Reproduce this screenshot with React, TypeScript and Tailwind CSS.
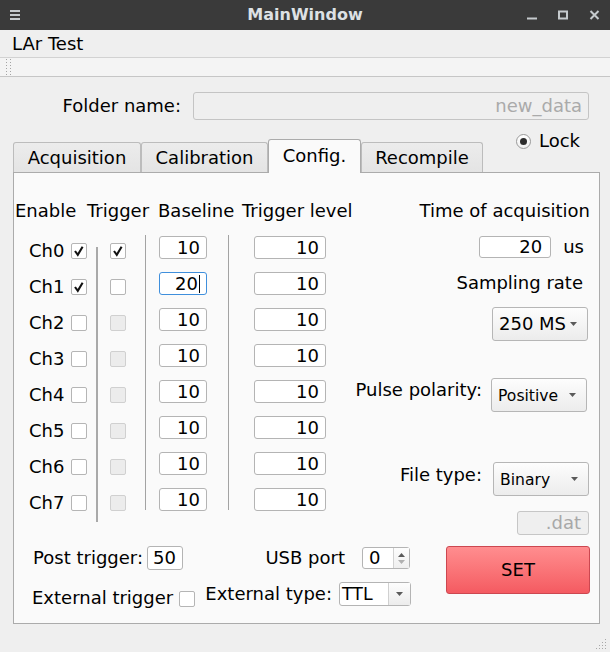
import React from "react";

function Check({ checked = false, disabled = false }: { checked?: boolean; disabled?: boolean }) {
  return (
    <div
      className={`w-[16px] h-[16px] shrink-0 rounded-[2px] border flex items-center justify-center ${
        disabled ? "bg-[#ececec] border-[#d0d0d0]" : "bg-white border-[#b5b5b5]"
      }`}
    >
      {checked && (
        <svg width="14" height="14" viewBox="0 0 14 14">
          <path d="M3 7 L5.8 10.8 L10.6 2.8" fill="none" stroke="#111" strokeWidth="2.1" />
        </svg>
      )}
    </div>
  );
}

function Arrow({ color = "#5a5a5a" }: { color?: string }) {
  return (
    <svg width="7" height="4" viewBox="0 0 7 4">
      <path d="M0 0 H7 L3.5 4 Z" fill={color} />
    </svg>
  );
}

function Field({ value, className, focused = false }: { value: string; className: string; focused?: boolean }) {
  return (
    <div
      className={`${className} shrink-0 rounded-[3px] border bg-white flex items-center justify-end pr-[6px] leading-[20px] ${
        focused ? "border-[#3f8fdc]" : "border-[#b4b4b4]"
      }`}
    >
      <span>{value}</span>
      {focused && <span className="ml-[1px] w-px h-[18px] bg-black" />}
    </div>
  );
}

function Combo({ text, className, textClass }: { text: string; className: string; textClass: string }) {
  return (
    <div
      className={`${className} shrink-0 rounded-[3px] border border-[#b6b6b6] bg-gradient-to-b from-[#fdfdfd] to-[#ececec] flex items-center pl-[6px] pr-[10px]`}
    >
      <span className={textClass}>{text}</span>
      <span className="ml-auto flex">
        <Arrow />
      </span>
    </div>
  );
}

const channels = [0, 1, 2, 3, 4, 5, 6, 7];

export default function App() {
  return (
    <div className="w-[610px] h-[652px] bg-[#efefef] flex flex-col overflow-hidden text-[18px] leading-[20px] text-black font-['DejaVu_Sans',sans-serif]">
      {/* Title bar */}
      <div className="h-[30px] shrink-0 bg-[#3a3a3a] grid grid-cols-[1fr_auto_1fr] items-center">
        <div className="pl-[10px] flex items-center">
          <svg width="10" height="10" viewBox="0 0 10 10">
            <rect x="0" y="0" width="10" height="2" fill="#c5cacd" />
            <rect x="0" y="4" width="10" height="2" fill="#c5cacd" />
            <rect x="0" y="8" width="10" height="2" fill="#c5cacd" />
          </svg>
        </div>
        <div className="text-[16px] font-bold text-[#dde1e4] leading-[20px]">MainWindow</div>
        <div className="flex items-center justify-end gap-[21px] pr-[10px]">
          <svg width="10" height="10" viewBox="0 0 10 10">
            <rect x="0" y="7.5" width="10" height="2" fill="#c5cacd" />
          </svg>
          <svg width="10" height="10" viewBox="0 0 10 10">
            <rect x="1" y="1.5" width="8" height="7" fill="none" stroke="#c5cacd" strokeWidth="2" />
          </svg>
          <svg width="11" height="10" viewBox="0 0 11 10">
            <path d="M1.5 1 L9.5 9 M9.5 1 L1.5 9" stroke="#c5cacd" strokeWidth="2" />
          </svg>
        </div>
      </div>

      {/* Menu bar */}
      <div className="h-[28px] shrink-0 flex items-center px-[12px] border-b border-[#d2d2d2]">LAr Test</div>

      {/* Toolbar */}
      <div className="h-[19px] shrink-0 bg-[#f4f4f4] border-b border-[#c6c6c6] flex items-center pl-[5px]">
        <svg width="8" height="18" viewBox="0 0 8 18">
          {[0, 1, 2, 3, 4, 5].map((i) => (
            <g key={i}>
              <rect x="1" y={1 + i * 3} width="1" height="1" fill="#a4a4a4" />
              <rect x="5" y={1 + i * 3} width="1" height="1" fill="#a4a4a4" />
            </g>
          ))}
        </svg>
      </div>

      {/* Folder name */}
      <div className="mt-[15px] h-[28px] flex items-center">
        <div className="w-[181px] text-right">Folder name:</div>
        <div className="ml-[12px] w-[396px] h-[28px] rounded-[3px] border border-[#c4c4c4] bg-[#efefef] flex items-center justify-end pr-[6px] text-[#aaaaaa]">
          new_data
        </div>
      </div>

      {/* Tabs row */}
      <div className="mt-[19px] h-[33px] flex items-end pl-[13px]">
        <div className="w-[128px] h-[30px] rounded-t-[3px] border border-b-0 border-[#bcbcbc] bg-gradient-to-b from-[#ececec] to-[#e4e4e4] flex items-center justify-center">
          Acquisition
        </div>
        <div className="w-[127px] h-[30px] rounded-t-[3px] border border-b-0 border-[#bcbcbc] bg-gradient-to-b from-[#ececec] to-[#e4e4e4] flex items-center justify-center">
          Calibration
        </div>
        <div className="relative z-10 w-[93px] h-[34px] -mb-[1px] rounded-t-[3px] border border-b-0 border-[#ababab] bg-[#fafafa] flex items-center justify-center pb-[1px]">
          Config.
        </div>
        <div className="w-[122px] h-[30px] rounded-t-[3px] border border-b-0 border-[#bcbcbc] bg-gradient-to-b from-[#ececec] to-[#e4e4e4] flex items-center justify-center">
          Recompile
        </div>
        <div className="ml-auto self-start -mt-[8px] mr-[30px] h-[20px] flex items-center gap-[8px]">
          <div className="w-[15px] h-[15px] rounded-full border border-[#9a9a9a] bg-gradient-to-b from-white to-[#f0f0f0] flex items-center justify-center">
            <div className="w-[7px] h-[7px] rounded-full bg-[#2c2c2c]" />
          </div>
          <span>Lock</span>
        </div>
      </div>

      {/* Tab pane */}
      <div className="ml-[13px] w-[587px] h-[452px] shrink-0 border border-[#ababab] bg-[#fafafa] flex flex-col">
        {/* upper section */}
        <div className="pt-[28px] flex items-start">
          {/* left block */}
          <div className="w-[336px] shrink-0 flex flex-col">
            <div className="h-[20px] grid grid-cols-[72px_71px_84px_1fr] pl-[1px] whitespace-nowrap">
              <span>Enable</span>
              <span>Trigger</span>
              <span>Baseline</span>
              <span>Trigger level</span>
            </div>
            <div className="mt-[14px] flex items-start">
              {/* Enable column */}
              <div className="w-[82px] pt-[4px] pl-[15px] flex flex-col gap-[13px]">
                {channels.map((c) => (
                  <div key={c} className="h-[23px] flex items-center">
                    <span className="w-[42px]">Ch{c}</span>
                    <Check checked={c < 2} />
                  </div>
                ))}
              </div>
              <div className="w-[2px] mt-[12px] h-[275px] bg-[#a9a9a9]" />
              {/* Trigger column */}
              <div className="w-[47px] pt-[4px] pl-[12px] flex flex-col gap-[13px]">
                {channels.map((c) => (
                  <div key={c} className="h-[23px] flex items-center">
                    <Check checked={c === 0} disabled={c >= 2} />
                  </div>
                ))}
              </div>
              <div className="w-px h-[275px] bg-[#a3a3a3]" />
              {/* Baseline column */}
              <div className="w-[82px] pt-[1px] pl-[13px] flex flex-col gap-[13px]">
                {channels.map((c) => (
                  <Field key={c} value={c === 1 ? "20" : "10"} focused={c === 1} className="w-[48px] h-[23px]" />
                ))}
              </div>
              <div className="w-px h-[275px] bg-[#a3a3a3]" />
              {/* Trigger level column */}
              <div className="pt-[1px] pl-[25px] flex flex-col gap-[13px]">
                {channels.map((c) => (
                  <Field key={c} value="10" className="w-[72px] h-[23px]" />
                ))}
              </div>
            </div>
          </div>

          {/* right block */}
          <div className="flex-1 flex flex-col items-end">
            <div className="h-[20px] mr-[9px] whitespace-nowrap">Time of acquisition</div>
            <div className="mt-[15px] mr-[15px] h-[22px] flex items-center gap-[12px]">
              <Field value="20" className="w-[72px] h-[22px] pr-[8px]" />
              <span>us</span>
            </div>
            <div className="mt-[15px] mr-[16px] h-[20px]">Sampling rate</div>
            <div className="mt-[14px] mr-[11px]">
              <Combo text="250 MS" className="w-[96px] h-[34px]" textClass="text-[18px]" />
            </div>
            <div className="mt-[37px] mr-[12px] flex items-start gap-[9px]">
              <span className="mt-[2px] whitespace-nowrap">Pulse polarity:</span>
              <Combo text="Positive" className="w-[96px] h-[34px]" textClass="text-[15.6px] pt-[2px]" />
            </div>
            <div className="mt-[50px] mr-[10px] flex items-start gap-[11px]">
              <span className="mt-[3px] whitespace-nowrap">File type:</span>
              <Combo text="Binary" className="w-[96px] h-[34px]" textClass="text-[15.6px] pt-[2px]" />
            </div>
            <div className="mt-[15px] mr-[10px] w-[72px] h-[24px] rounded-[3px] border border-[#c6c6c6] bg-[#efefef] flex items-center justify-end pr-[7px] text-[#a8a8a8]">
              .dat
            </div>
          </div>
        </div>

        {/* bottom section */}
        <div className="mt-[11px] flex items-start">
          <div className="w-[397px] shrink-0 flex flex-col">
            <div className="h-[24px] flex items-center">
              <span className="w-[129px] text-right whitespace-nowrap">Post trigger:</span>
              <div className="ml-[4px]">
                <Field value="50" className="w-[36px] h-[24px] pr-[5px]" />
              </div>
              <span className="w-[162px] text-right whitespace-nowrap">USB port</span>
              <div className="ml-[17px] w-[48px] h-[22px] rounded-[3px] border border-[#b4b4b4] bg-white flex">
                <span className="flex-1 pl-[6px] leading-[20px]">0</span>
                <div className="w-[16px] border-l border-[#d2d2d2] bg-gradient-to-b from-[#fdfdfd] to-[#efefef] flex flex-col items-center justify-center gap-[3px]">
                  <svg width="7" height="4" viewBox="0 0 7 4">
                    <path d="M0 4 H7 L3.5 0 Z" fill="#5a5a5a" />
                  </svg>
                  <Arrow color="#b0b0b0" />
                </div>
              </div>
            </div>
            <div className="mt-[12px] h-[24px] flex items-start">
              <span className="w-[165px] pl-[18px] mt-[6px] whitespace-nowrap">External trigger</span>
              <div className="mt-[9px]">
                <Check />
              </div>
              <span className="w-[137px] text-right mt-[2px] whitespace-nowrap">External type:</span>
              <div className="ml-[7px] w-[72px] h-[24px] rounded-[3px] border border-[#b4b4b4] bg-white flex">
                <span className="flex-1 pl-[2px] leading-[22px] text-[17.4px]">TTL</span>
                <div className="w-[22px] border-l border-[#d0d0d0] bg-gradient-to-b from-[#fdfdfd] to-[#ececec] flex items-center justify-center">
                  <Arrow />
                </div>
              </div>
            </div>
          </div>
          <div className="ml-[35px] w-[144px] h-[48px] rounded-[3px] border border-[#cc4750] bg-gradient-to-b from-[#ff8d8f] to-[#f45a61] flex items-center justify-center">
            SET
          </div>
        </div>
      </div>

      {/* bottom strip with size grip */}
      <div className="flex-1 flex items-end justify-end pr-[3px] pb-[3px]">
        <svg width="11" height="11" viewBox="0 0 11 11">
          {[
            [9, 1],
            [9, 4],
            [6, 4],
            [9, 7],
            [6, 7],
            [3, 7],
            [9, 10],
            [6, 10],
            [3, 10],
            [0, 10],
          ].map(([x, y], i) => (
            <rect key={i} x={x} y={y} width="1" height="1" fill="#a8a8a8" />
          ))}
        </svg>
      </div>
    </div>
  );
}
